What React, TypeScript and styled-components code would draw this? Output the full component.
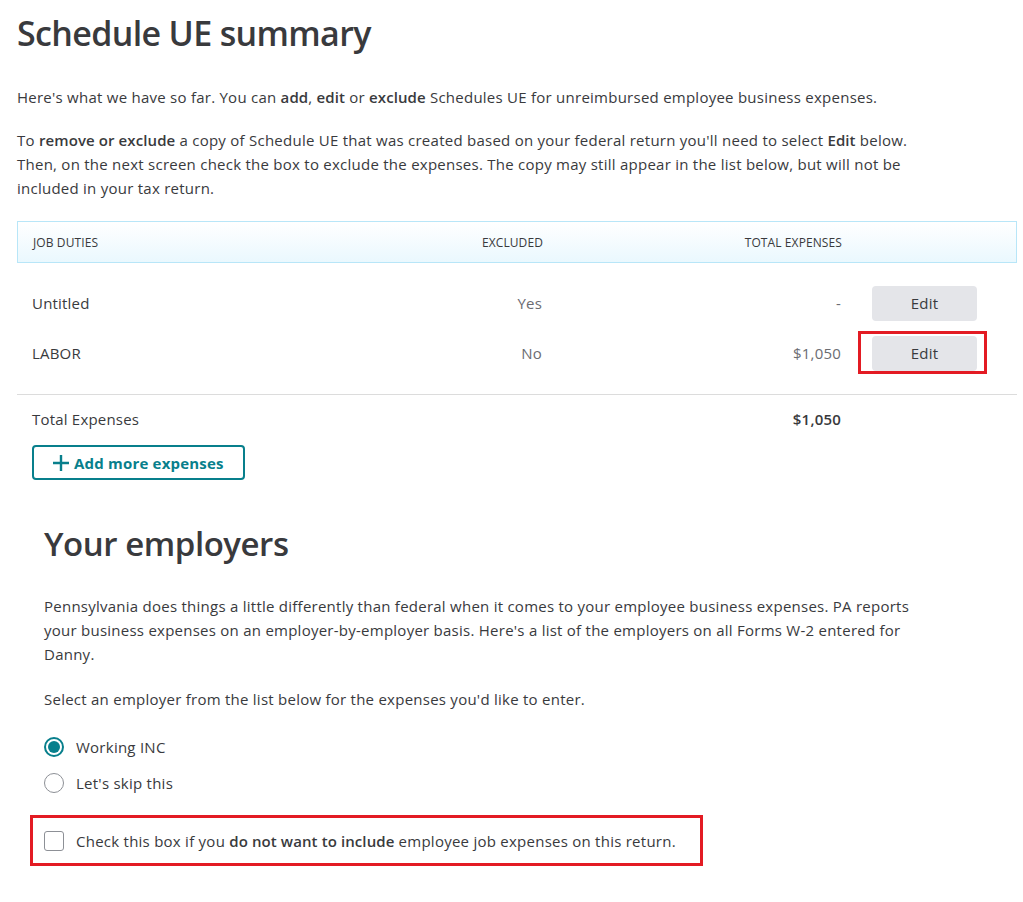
import styled, { createGlobalStyle } from 'styled-components'

const GlobalStyle = createGlobalStyle`
  body {
    margin: 0;
    background: #fff;
    font-family: "Open Sans", "Liberation Sans", sans-serif;
    color: #393a3d;
  }
`

const Page = styled.div`
  padding: 8px 6px 30px 17px;
  width: 1000px;
`

const PageTitle = styled.h1`
  margin: 0;
  font-size: 34px;
  font-weight: 600;
  line-height: 50px;
  letter-spacing: -0.65px;
`

const Paragraph = styled.p<{ $top?: number; $width?: number }>`
  margin: ${p => p.$top ?? 24}px 0 0;
  font-size: 15px;
  line-height: 24px;
  letter-spacing: 0.25px;
  max-width: ${p => p.$width ?? 900}px;
  & b {
    font-weight: 600;
    letter-spacing: 0.1px;
  }
`

const Table = styled.div`
  margin-top: 21px;
`

const Grid = styled.div`
  display: grid;
  grid-template-columns: 330px 180px 299px 136px;
  align-items: center;
  padding: 0 40px 0 15px;
`

const HeaderRow = styled(Grid)`
  height: 40px;
  border: 1px solid #b8e6f8;
  background: linear-gradient(to bottom, #ffffff, #eaf8fe);
  font-size: 12px;
  color: #6b6c72;
  text-transform: uppercase;
  letter-spacing: 0.1px;
`

const Body = styled.div`
  padding: 15px 0 16px;
  border-bottom: 1px solid #dcdcdc;
`

const DataRow = styled(Grid)`
  height: 50px;
  font-size: 15px;
  letter-spacing: 0.2px;
`

const Cell = styled.div<{ $right?: boolean; $muted?: boolean; $bold?: boolean }>`
  text-align: ${p => (p.$right ? 'right' : 'left')};
  color: ${p => (p.$muted ? '#6b6c72' : '#393a3d')};
  font-weight: ${p => (p.$bold ? 600 : 400)};
`

const ActionCell = styled.div`
  padding-left: 31px;
`

const Highlight = styled.div<{ $on?: boolean }>`
  position: relative;
  width: 105px;
  &::after {
    content: '';
    display: ${p => (p.$on ? 'block' : 'none')};
    position: absolute;
    top: -5px;
    left: -14px;
    right: -10px;
    bottom: -3px;
    border: 3px solid #e31b23;
    pointer-events: none;
  }
`

const EditButton = styled.button`
  display: block;
  width: 105px;
  height: 35px;
  border: none;
  border-radius: 4px;
  background: #e4e5e9;
  color: #393a3d;
  font-family: inherit;
  font-size: 15px;
  letter-spacing: 0.2px;
`

const TotalRow = styled(DataRow)`
  height: 48px;
`

const AddButton = styled.button`
  display: flex;
  align-items: center;
  gap: 4px;
  margin-left: 15px;
  margin-top: 2px;
  height: 35px;
  padding: 0 19px 0 18px;
  border: 2px solid #087f8c;
  border-radius: 4px;
  background: #fff;
  color: #087f8c;
  font-family: inherit;
  font-size: 15px;
  font-weight: 700;
  letter-spacing: 0.2px;
`

const Employers = styled.section`
  padding-left: 27px;
  margin-top: 44px;
`

const SectionTitle = styled.h2`
  margin: 0;
  font-size: 33px;
  font-weight: 600;
  line-height: 40px;
  letter-spacing: -0.45px;
`

const OptionList = styled.div`
  margin-top: 26px;
  display: flex;
  flex-direction: column;
  gap: 16px;
`

const Option = styled.label`
  display: flex;
  align-items: center;
  gap: 12px;
  font-size: 15px;
  line-height: 20px;
  letter-spacing: 0.25px;
  & b {
    font-weight: 600;
    letter-spacing: 0.1px;
  }
`

const Radio = styled.span<{ $checked?: boolean }>`
  box-sizing: border-box;
  width: 20px;
  height: 20px;
  border-radius: 50%;
  border: ${p => (p.$checked ? '2px solid #087f8c' : '1px solid #8d9096')};
  display: flex;
  align-items: center;
  justify-content: center;
  &::after {
    content: '';
    display: ${p => (p.$checked ? 'block' : 'none')};
    width: 12px;
    height: 12px;
    border-radius: 50%;
    background: #087f8c;
  }
`

const ExcludeBox = styled.div`
  box-sizing: border-box;
  margin: 22px 0 0 -14px;
  width: 673px;
  height: 51px;
  border: 3px solid #e31b23;
  padding-left: 11px;
  display: flex;
  align-items: center;
`

const Checkbox = styled.span`
  box-sizing: border-box;
  width: 20px;
  height: 20px;
  border: 1px solid #8d9096;
  border-radius: 3px;
`

const rows = [
  { duty: 'Untitled', excluded: 'Yes', total: '-' },
  { duty: 'LABOR', excluded: 'No', total: '$1,050', highlighted: true },
]

const App = () => {
  return (
    <Page>
      <GlobalStyle />
      <PageTitle>Schedule UE summary</PageTitle>
      <Paragraph $top={27}>
        Here's what we have so far. You can <b>add</b>, <b>edit</b> or <b>exclude</b> Schedules UE for unreimbursed employee business expenses.
      </Paragraph>
      <Paragraph $top={19}>
        To <b>remove or exclude</b> a copy of Schedule UE that was created based on your federal return you'll need to select <b>Edit</b> below.
        Then, on the next screen check the box to exclude the expenses. The copy may still appear in the list below, but will not be
        included in your tax return.
      </Paragraph>

      <Table>
        <HeaderRow>
          <Cell>Job duties</Cell>
          <Cell $right>Excluded</Cell>
          <Cell $right>Total expenses</Cell>
          <div />
        </HeaderRow>
        <Body>
          {rows.map(row => (
            <DataRow key={row.duty}>
              <Cell>{row.duty}</Cell>
              <Cell $right $muted>{row.excluded}</Cell>
              <Cell $right $muted>{row.total}</Cell>
              <ActionCell>
                <Highlight $on={row.highlighted}>
                  <EditButton>Edit</EditButton>
                </Highlight>
              </ActionCell>
            </DataRow>
          ))}
        </Body>
        <TotalRow>
          <Cell>Total Expenses</Cell>
          <div />
          <Cell $right $bold>$1,050</Cell>
          <div />
        </TotalRow>
      </Table>

      <AddButton>
        <svg width="18" height="18" viewBox="0 0 18 18">
          <path d="M9 1v16M1 9h16" stroke="#087f8c" strokeWidth="2.4" fill="none" />
        </svg>
        Add more expenses
      </AddButton>

      <Employers>
        <SectionTitle>Your employers</SectionTitle>
        <Paragraph $top={30} $width={872}>
          Pennsylvania does things a little differently than federal when it comes to your employee business expenses. PA reports
          your business expenses on an employer-by-employer basis. Here's a list of the employers on all Forms W-2 entered for
          Danny.
        </Paragraph>
        <Paragraph $top={21}>Select an employer from the list below for the expenses you'd like to enter.</Paragraph>

        <OptionList>
          <Option>
            <Radio $checked />
            Working INC
          </Option>
          <Option>
            <Radio />
            Let's skip this
          </Option>
        </OptionList>

        <ExcludeBox>
          <Option>
            <Checkbox />
            <span>
              Check this box if you <b>do not want to include</b> employee job expenses on this return.
            </span>
          </Option>
        </ExcludeBox>
      </Employers>
    </Page>
  )
}

export default App
